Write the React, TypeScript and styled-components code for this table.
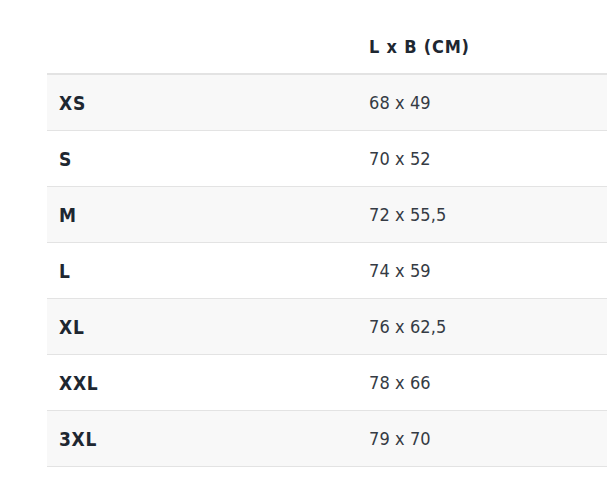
import React from "react";
import styled, { createGlobalStyle } from "styled-components";

const Global = createGlobalStyle`
  html, body { margin: 0; padding: 0; background: #ffffff; }
  body { font-family: "DejaVu Sans Condensed", "DejaVu Sans", sans-serif; }
`;

const Page = styled.div`
  padding: 19px 0 0 47px;
  width: 607px;
  box-sizing: border-box;
`;

const Table = styled.div`
  display: grid;
  grid-template-columns: 310px 1fr;
`;

const Row = styled.div<{ $shade?: boolean; $head?: boolean }>`
  display: contents;
  & > div {
    background: ${(p) => (p.$shade ? "#f8f8f8" : "#ffffff")};
    border-bottom: ${(p) => (p.$head ? "2px solid #e3e3e3" : "1px solid #e3e3e3")};
    height: ${(p) => (p.$head ? "54px" : "55px")};
  }
`;

const Cell = styled.div<{ $bold?: boolean }>`
  display: flex;
  align-items: center;
  padding-left: 12px;
  font-size: ${(p) => (p.$bold ? "19px" : "18px")};
  letter-spacing: ${(p) => (p.$bold ? "0.7px" : "0.1px")};
  font-weight: ${(p) => (p.$bold ? 700 : 400)};
  color: ${(p) => (p.$bold ? "#1e2731" : "#353b44")};
`;

const HeadCell = styled(Cell)`
  font-weight: 700;
  color: #1e2731;
  font-size: 18px;
  letter-spacing: 0.8px;
`;

const sizes: [string, string][] = [
  ["XS", "68 x 49"],
  ["S", "70 x 52"],
  ["M", "72 x 55,5"],
  ["L", "74 x 59"],
  ["XL", "76 x 62,5"],
  ["XXL", "78 x 66"],
  ["3XL", "79 x 70"],
];

export default function App() {
  return (
    <>
      <Global />
      <Page>
        <Table>
          <Row $head>
            <HeadCell />
            <HeadCell>L x B (CM)</HeadCell>
          </Row>
          {sizes.map(([s, v], i) => (
            <Row key={s} $shade={i % 2 === 0}>
              <Cell $bold>{s}</Cell>
              <Cell>{v}</Cell>
            </Row>
          ))}
        </Table>
      </Page>
    </>
  );
}
